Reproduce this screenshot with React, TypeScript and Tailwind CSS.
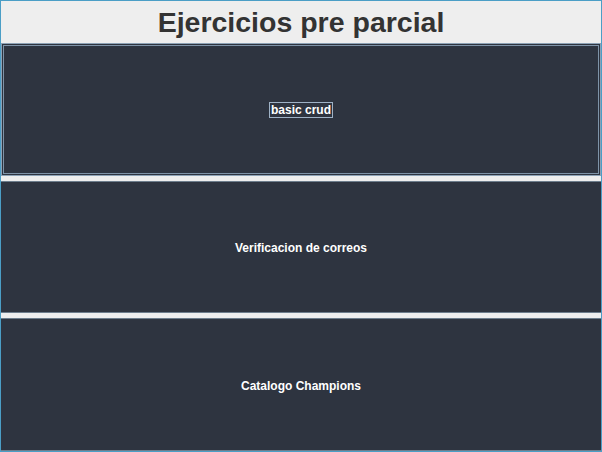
export default function App() {
  const items = ['basic crud', 'Verificacion de correos', 'Catalogo Champions'];
  return (
    <div
      className="w-[602px] h-[452px] flex flex-col border border-[#4b9ec6] bg-[#eeeeee]"
      style={{ fontFamily: '"Liberation Sans", Arial, sans-serif' }}
    >
      <div className="h-[42px] flex items-center justify-center">
        <h1 className="text-[28.5px] font-bold text-[#333333] leading-none">Ejercicios pre parcial</h1>
      </div>
      <div className="flex-1 flex flex-col gap-[5px]">
        {items.map((label, i) => (
          <button
            key={label}
            className={
              i === 0
                ? 'flex-1 flex items-center justify-center bg-[#2e3440] border border-[#8da2b6] outline outline-1 -outline-offset-3 outline-[#7e93a8]'
                : 'flex-1 flex items-center justify-center bg-[#2e3440] border-y border-[#6d7d8c]'
            }
          >
            <span
              className={
                i === 0
                  ? 'mt-[2px] text-white text-[12px] font-bold border border-[#9fb2c6] px-[1px] leading-[14px]'
                  : 'mt-[2px] text-white text-[12px] font-bold leading-[14px]'
              }
            >
              {label}
            </span>
          </button>
        ))}
      </div>
    </div>
  );
}
